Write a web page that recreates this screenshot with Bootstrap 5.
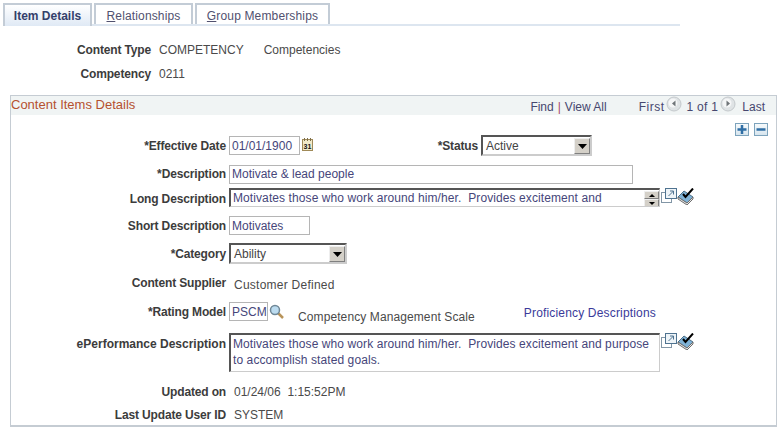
<!DOCTYPE html>
<html lang="en">
<head>
  <meta charset="UTF-8" />
  <title>Content Items Details</title>
  <link href="https://cdn.jsdelivr.net/npm/bootstrap@5.3.3/dist/css/bootstrap.min.css" rel="stylesheet">
  <style>
    body { font-family: "Liberation Sans", Arial, sans-serif; font-size: 12px; color: #444; background: #fff; line-height: 14px; }
    .page-wrap { width: 783px; height: 434px; overflow: hidden; padding: 3px 0 0 3px; }

    /* tabs */
    .tab-bar { width: 677px; height: 23px; border-bottom: 2px solid #dde6f0; gap: 2px; }
    .tab-item { height: 21px; padding-top: 4px; border: 2px solid #c3ccd6; border-bottom: 0; color: #51516f; background: #fff; text-decoration: none; text-align: center; letter-spacing: .15px; }
    .tab-on { width: 89px; height: 23px; font-weight: bold; color: #34406b; background: linear-gradient(#fff, #dfe9f5); letter-spacing: 0; }
    .tab-two { width: 99px; }
    .tab-three { width: 135px; }

    /* header block */
    .lbl { font-weight: bold; color: #3c3c3c; text-align: right; flex: none; letter-spacing: -.15px; }
    .val { color: #4a4a4a; }
    .top-info { padding-top: 17px; }
    .top-row { height: 24px; }
    .top-row .lbl { width: 148px; margin-right: 8px; }
    .type-name { margin-left: 20px; }

    /* panel */
    .panel-box { margin: 4px 0 0 7px; width: 767px; height: 332px; border: 1px solid #c5ccd3; border-bottom-width: 2px; }
    .panel-head { height: 19px; background: #f0f4f4; padding-right: 11px; }
    .panel-title { color: #b5502f; font-size: 13px; padding: 2px 0 0; }
    .nav-links { color: #47476f; padding-top: 4px; }
    .nav-links a { color: #47476f; text-decoration: none; }
    .sep { color: #a8456e; padding: 0 4px; }
    .nav-first { margin-left: 32px; letter-spacing: .5px; }
    .nav-count { letter-spacing: .3px; }
    .nav-arrow { margin: -4px 4px 0 2px; }
    .nav-arrow-r { margin-right: 6px; }
    .add-row { height: 21px; padding: 8px 8px 0 0; gap: 5px; }
    .grid-btn { width: 14px; height: 13px; border: 1px solid #7da3bc; background: linear-gradient(#f6fafc, #d7e5ee); }

    /* form rows, heights follow the original spacing */
    .frm-row .lbl { width: 215px; margin-right: 3px; }
    .r-date { height: 29px; }
    .r-desc { height: 23px; }
    .r-long { height: 28px; }
    .r-short { height: 27px; }
    .r-cat { height: 32px; }
    .r-supp { height: 27px; }
    .r-rate { height: 31px; }
    .r-perf { height: 49px; }
    .r-upd { height: 23px; }
    .r-last { height: 20px; }
    .lbl-p1 { padding-top: 1px; }
    .lbl-p2 { padding-top: 2px; }
    .lbl-p3 { padding-top: 3px; }
    .lbl-p4 { padding-top: 4px; }
    .frm-row .lbl-wide { letter-spacing: 0; }
    .val-gap { margin-left: 5px; }
    .val-low { padding-top: 3px; letter-spacing: .25px; }
    .frm-row .status-lbl { width: 100px; margin-left: 64px; }

    .fld { height: 19px; border: 1px solid #b5b5b5; color: #46467a; background: #fff; padding: 2px 0 0 2px; white-space: nowrap; overflow: hidden; }
    .fld-date { width: 71px; }
    .fld-desc { width: 404px; padding-top: 1px; }
    .fld-short { width: 81px; }
    .fld-rating { width: 39px; }
    .cal-icon { margin: 2px 0 0 2px; }
    .drop { height: 21px; border: 2px solid #555; border-right-color: #ccc; border-bottom-color: #ccc; color: #444; padding: 2px 0 0 3px; background: #fff; }
    .drop-status { width: 111px; margin-top: -1px; }
    .drop-cat { width: 118px; }
    .drop-arrow { width: 16px; height: 16px; margin-top: -1px; background: #d4d0c8; border: 1px solid #808080; border-top-color: #eee; border-left-color: #eee; }
    .area-long { width: 431px; height: 19px; border: 2px solid #555; border-right: 1px solid #ccc; border-bottom: 1px solid #ccc; color: #46467a; padding: 1px 0 0 2px; white-space: nowrap; overflow: hidden; letter-spacing: .09px; }
    .long-txt { width: 413px; overflow: hidden; }
    .spin-col { width: 15px; }
    .spin-part { height: 8px; background: #d4d0c8; border: 1px solid #808080; border-top-color: #eee; border-left-color: #eee; }
    .area-perf { width: 431px; height: 39px; border: 2px solid #555; border-right: 1px solid #ccc; border-bottom: 1px solid #ccc; color: #46467a; padding: 1px 0 0 2px; line-height: 16px; letter-spacing: .09px; }
    .icon-gap { margin-left: 1px; }
    .lookup-icon { margin: 2px 0 0 1px; }
    .rate-name { margin-left: 14px; padding-top: 8px; letter-spacing: .1px; }
    .prof-link { margin-left: 49px; padding-top: 4px; color: #3a3a9a; text-decoration: none; letter-spacing: .17px; }
  </style>
</head>
<body class="m-0">
<div class="page-wrap">

  <div class="tab-bar d-flex">
    <a class="tab-item tab-on" href="#">Item Details</a>
    <a class="tab-item tab-two" href="#"><u>R</u>elationships</a>
    <a class="tab-item tab-three" href="#"><u>G</u>roup Memberships</a>
  </div>

  <div class="top-info">
    <div class="top-row d-flex">
      <div class="lbl">Content Type</div>
      <div class="val">COMPETENCY</div>
      <div class="val type-name">Competencies</div>
    </div>
    <div class="top-row d-flex">
      <div class="lbl">Competency</div>
      <div class="val">0211</div>
    </div>
  </div>

  <div class="panel-box">
    <div class="panel-head d-flex justify-content-between">
      <div class="panel-title">Content Items Details</div>
      <div class="nav-links d-flex">
        <a href="#">Find</a><span class="sep">|</span><a href="#">View All</a>
        <span class="nav-first">First</span>
        <svg class="nav-arrow" width="16" height="16" viewBox="0 0 16 16"><circle cx="8" cy="8" r="7" fill="#dfe3e5" stroke="#c4c9cc"/><circle cx="7" cy="7" r="4.500" fill="#f5f6f7"/><path d="M9.500 4.500v6L6 7.500z" fill="#6f7478"/></svg>
        <span class="nav-count">1 of 1</span>
        <svg class="nav-arrow nav-arrow-r" width="16" height="16" viewBox="0 0 16 16"><circle cx="8" cy="8" r="7" fill="#dfe3e5" stroke="#c4c9cc"/><circle cx="7" cy="7" r="4.500" fill="#f5f6f7"/><path d="M6.500 4.500v6L10 7.500z" fill="#6f7478"/></svg>
        <span>Last</span>
      </div>
    </div>
    <div class="add-row d-flex justify-content-end">
      <div class="grid-btn d-flex"><svg width="12" height="11" viewBox="0 0 12 11"><path d="M6 1v9M1.500 5.500h9" stroke="#2f6ea5" stroke-width="2.500"/></svg></div>
      <div class="grid-btn d-flex"><svg width="12" height="11" viewBox="0 0 12 11"><path d="M1.500 5.500h9" stroke="#2f6ea5" stroke-width="2.500"/></svg></div>
    </div>

    <div class="frm-row r-date d-flex">
      <div class="lbl lbl-p3">*Effective Date</div>
      <div class="fld fld-date">01/01/1900</div>
      <svg class="cal-icon" width="12" height="14" viewBox="0 0 12 14"><rect x=".5" y="1.500" width="10" height="11" fill="#f1e9c9" stroke="#a08a58"/><path d="M2.500 0v3M5.500 0v3M8.500 0v3" stroke="#7d6e48"/><text x="5.500" y="10.500" font-size="7" font-weight="bold" text-anchor="middle" fill="#111">31</text></svg>
      <div class="lbl lbl-p3 status-lbl">*Status</div>
      <div class="drop drop-status d-flex justify-content-between">Active<div class="drop-arrow d-flex align-items-center justify-content-center"><svg width="9" height="5" viewBox="0 0 9 5"><path d="M0 0h9L4.500 5z" fill="#000"/></svg></div></div>
    </div>

    <div class="frm-row r-desc d-flex">
      <div class="lbl lbl-p2">*Description</div>
      <div class="fld fld-desc">Motivate &amp; lead people</div>
    </div>

    <div class="frm-row r-long d-flex">
      <div class="lbl lbl-p4">Long Description</div>
      <div class="area-long d-flex justify-content-between">
        <span class="long-txt">Motivates those who work around him/her.&nbsp; Provides excitement and</span>
        <div class="spin-col">
          <div class="spin-part d-flex align-items-center justify-content-center"><svg width="6" height="3" viewBox="0 0 6 3"><path d="M0 3h6L3 0z" fill="#000"/></svg></div>
          <div class="spin-part d-flex align-items-center justify-content-center"><svg width="6" height="3" viewBox="0 0 6 3"><path d="M0 0h6L3 3z" fill="#000"/></svg></div>
        </div>
      </div>
      <svg class="icon-gap" width="16" height="16" viewBox="0 0 16 16"><rect x=".5" y="4.500" width="10" height="10" fill="#fff" stroke="#8296a6"/><rect x="4.500" y=".5" width="11" height="10" fill="#eef4f8" stroke="#4f7390"/><path d="M7.500 8l5-5M9 3h3.500v3.500" fill="none" stroke="#4f7390"/></svg>
      <svg width="18" height="17" viewBox="0 0 18 17"><path d="M1 9l6-6 9 6-6 6z" fill="#7fb2d6" stroke="#4c6f88"/><path d="M1 9v2l9 6 6-6V9l-6 6z" fill="#e6e6e6" stroke="#6d6d6d"/><path d="M6 6l2.500 3L16 .5" fill="none" stroke="#000" stroke-width="2"/></svg>
    </div>

    <div class="frm-row r-short d-flex">
      <div class="lbl lbl-p3">Short Description</div>
      <div class="fld fld-short">Motivates</div>
    </div>

    <div class="frm-row r-cat d-flex">
      <div class="lbl lbl-p4">*Category</div>
      <div class="drop drop-cat d-flex justify-content-between">Ability<div class="drop-arrow d-flex align-items-center justify-content-center"><svg width="9" height="5" viewBox="0 0 9 5"><path d="M0 0h9L4.500 5z" fill="#000"/></svg></div></div>
    </div>

    <div class="frm-row r-supp d-flex">
      <div class="lbl lbl-p1">Content Supplier</div>
      <div class="val val-gap val-low">Customer Defined</div>
    </div>

    <div class="frm-row r-rate d-flex">
      <div class="lbl lbl-p3">*Rating Model</div>
      <div class="fld fld-rating">PSCM</div>
      <svg class="lookup-icon" width="15" height="15" viewBox="0 0 15 15"><path d="M9 9l5 5" stroke="#b8945a" stroke-width="2.500"/><circle cx="6" cy="6" r="4.500" fill="#bcdcf0" stroke="#6f8796" stroke-width="1.500"/></svg>
      <div class="val rate-name">Competency Management Scale</div>
      <a class="prof-link" href="#">Proficiency Descriptions</a>
    </div>

    <div class="frm-row r-perf d-flex">
      <div class="lbl lbl-p4 lbl-wide">ePerformance Description</div>
      <div class="area-perf">Motivates those who work around him/her.&nbsp; Provides excitement and purpose<br>to accomplish stated goals.</div>
      <svg class="icon-gap" width="16" height="16" viewBox="0 0 16 16"><rect x=".5" y="4.500" width="10" height="10" fill="#fff" stroke="#8296a6"/><rect x="4.500" y=".5" width="11" height="10" fill="#eef4f8" stroke="#4f7390"/><path d="M7.500 8l5-5M9 3h3.500v3.500" fill="none" stroke="#4f7390"/></svg>
      <svg width="18" height="17" viewBox="0 0 18 17"><path d="M1 9l6-6 9 6-6 6z" fill="#7fb2d6" stroke="#4c6f88"/><path d="M1 9v2l9 6 6-6V9l-6 6z" fill="#e6e6e6" stroke="#6d6d6d"/><path d="M6 6l2.500 3L16 .5" fill="none" stroke="#000" stroke-width="2"/></svg>
    </div>

    <div class="frm-row r-upd d-flex">
      <div class="lbl lbl-p3">Updated on</div>
      <div class="val val-gap lbl-p3">01/24/06&nbsp; 1:15:52PM</div>
    </div>

    <div class="frm-row r-last d-flex">
      <div class="lbl lbl-p3">Last Update User ID</div>
      <div class="val val-gap lbl-p3">SYSTEM</div>
    </div>
  </div>

</div>
</body>
</html>
